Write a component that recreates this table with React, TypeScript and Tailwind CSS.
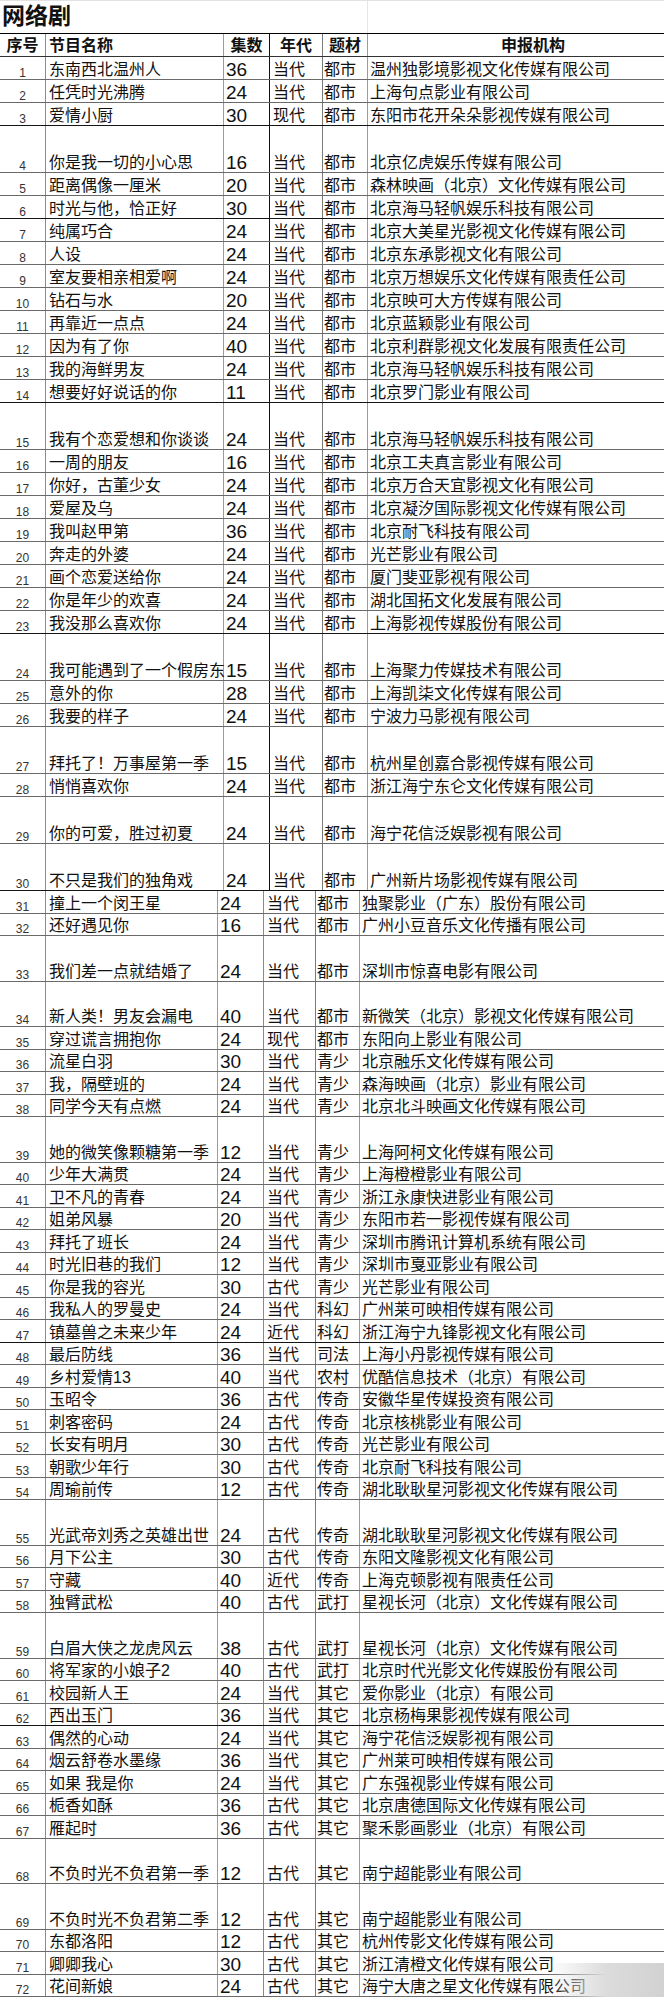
type Row = [number, string, number, string, string, string, boolean?];

const rows: Row[] = [
  [1, '东南西北温州人', 36, '当代', '都市', '温州独影境影视文化传媒有限公司'],
  [2, '任凭时光沸腾', 24, '当代', '都市', '上海句点影业有限公司'],
  [3, '爱情小厨', 30, '现代', '都市', '东阳市花开朵朵影视传媒有限公司'],
  [4, '你是我一切的小心思', 16, '当代', '都市', '北京亿虎娱乐传媒有限公司', true],
  [5, '距离偶像一厘米', 20, '当代', '都市', '森林映画（北京）文化传媒有限公司'],
  [6, '时光与他，恰正好', 30, '当代', '都市', '北京海马轻帆娱乐科技有限公司'],
  [7, '纯属巧合', 24, '当代', '都市', '北京大美星光影视文化传媒有限公司'],
  [8, '人设', 24, '当代', '都市', '北京东承影视文化有限公司'],
  [9, '室友要相亲相爱啊', 24, '当代', '都市', '北京万想娱乐文化传媒有限责任公司'],
  [10, '钻石与水', 20, '当代', '都市', '北京映可大方传媒有限公司'],
  [11, '再靠近一点点', 24, '当代', '都市', '北京蓝颖影业有限公司'],
  [12, '因为有了你', 40, '当代', '都市', '北京利群影视文化发展有限责任公司'],
  [13, '我的海鲜男友', 24, '当代', '都市', '北京海马轻帆娱乐科技有限公司'],
  [14, '想要好好说话的你', 11, '当代', '都市', '北京罗门影业有限公司'],
  [15, '我有个恋爱想和你谈谈', 24, '当代', '都市', '北京海马轻帆娱乐科技有限公司', true],
  [16, '一周的朋友', 16, '当代', '都市', '北京工夫真言影业有限公司'],
  [17, '你好，古董少女', 24, '当代', '都市', '北京万合天宜影视文化有限公司'],
  [18, '爱屋及乌', 24, '当代', '都市', '北京凝汐国际影视文化传媒有限公司'],
  [19, '我叫赵甲第', 36, '当代', '都市', '北京耐飞科技有限公司'],
  [20, '奔走的外婆', 24, '当代', '都市', '光芒影业有限公司'],
  [21, '画个恋爱送给你', 24, '当代', '都市', '厦门斐亚影视有限公司'],
  [22, '你是年少的欢喜', 24, '当代', '都市', '湖北国拓文化发展有限公司'],
  [23, '我没那么喜欢你', 24, '当代', '都市', '上海影视传媒股份有限公司'],
  [24, '我可能遇到了一个假房东', 15, '当代', '都市', '上海聚力传媒技术有限公司', true],
  [25, '意外的你', 28, '当代', '都市', '上海凯柒文化传媒有限公司'],
  [26, '我要的样子', 24, '当代', '都市', '宁波力马影视有限公司'],
  [27, '拜托了！万事屋第一季', 15, '当代', '都市', '杭州星创嘉合影视传媒有限公司', true],
  [28, '悄悄喜欢你', 24, '当代', '都市', '浙江海宁东仑文化传媒有限公司'],
  [29, '你的可爱，胜过初夏', 24, '当代', '都市', '海宁花信泛娱影视有限公司', true],
  [30, '不只是我们的独角戏', 24, '当代', '都市', '广州新片场影视传媒有限公司', true],
  [31, '撞上一个闵王星', 24, '当代', '都市', '独聚影业（广东）股份有限公司'],
  [32, '还好遇见你', 16, '当代', '都市', '广州小豆音乐文化传播有限公司'],
  [33, '我们差一点就结婚了', 24, '当代', '都市', '深圳市惊喜电影有限公司', true],
  [34, '新人类！男友会漏电', 40, '当代', '都市', '新微笑（北京）影视文化传媒有限公司', true],
  [35, '穿过谎言拥抱你', 24, '现代', '都市', '东阳向上影业有限公司'],
  [36, '流星白羽', 30, '当代', '青少', '北京融乐文化传媒有限公司'],
  [37, '我，隔壁班的', 24, '当代', '青少', '森海映画（北京）影业有限公司'],
  [38, '同学今天有点燃', 24, '当代', '青少', '北京北斗映画文化传媒有限公司'],
  [39, '她的微笑像颗糖第一季', 12, '当代', '青少', '上海阿柯文化传媒有限公司', true],
  [40, '少年大满贯', 24, '当代', '青少', '上海橙橙影业有限公司'],
  [41, '卫不凡的青春', 24, '当代', '青少', '浙江永康快进影业有限公司'],
  [42, '姐弟风暴', 20, '当代', '青少', '东阳市若一影视传媒有限公司'],
  [43, '拜托了班长', 24, '当代', '青少', '深圳市腾讯计算机系统有限公司'],
  [44, '时光旧巷的我们', 12, '当代', '青少', '深圳市戛亚影业有限公司'],
  [45, '你是我的容光', 30, '古代', '青少', '光芒影业有限公司'],
  [46, '我私人的罗曼史', 24, '当代', '科幻', '广州莱可映相传媒有限公司'],
  [47, '镇墓兽之未来少年', 24, '近代', '科幻', '浙江海宁九锋影视文化有限公司'],
  [48, '最后防线', 36, '当代', '司法', '上海小丹影视传媒有限公司'],
  [49, '乡村爱情13', 40, '当代', '农村', '优酷信息技术（北京）有限公司'],
  [50, '玉昭令', 36, '古代', '传奇', '安徽华星传媒投资有限公司'],
  [51, '刺客密码', 24, '古代', '传奇', '北京核桃影业有限公司'],
  [52, '长安有明月', 30, '古代', '传奇', '光芒影业有限公司'],
  [53, '朝歌少年行', 30, '古代', '传奇', '北京耐飞科技有限公司'],
  [54, '周瑜前传', 12, '古代', '传奇', '湖北耿耿星河影视文化传媒有限公司'],
  [55, '光武帝刘秀之英雄出世', 24, '古代', '传奇', '湖北耿耿星河影视文化传媒有限公司', true],
  [56, '月下公主', 30, '古代', '传奇', '东阳文隆影视文化有限公司'],
  [57, '守藏', 40, '近代', '传奇', '上海克顿影视有限责任公司'],
  [58, '独臂武松', 40, '古代', '武打', '星视长河（北京）文化传媒有限公司'],
  [59, '白眉大侠之龙虎风云', 38, '古代', '武打', '星视长河（北京）文化传媒有限公司', true],
  [60, '将军家的小娘子2', 40, '古代', '武打', '北京时代光影文化传媒股份有限公司'],
  [61, '校园新人王', 24, '当代', '其它', '爱你影业（北京）有限公司'],
  [62, '西出玉门', 36, '当代', '其它', '北京杨梅果影视传媒有限公司'],
  [63, '偶然的心动', 24, '当代', '其它', '海宁花信泛娱影视有限公司'],
  [64, '烟云舒卷水墨缘', 36, '当代', '其它', '广州莱可映相传媒有限公司'],
  [65, '如果 我是你', 24, '当代', '其它', '广东强视影业传媒有限公司'],
  [66, '栀香如酥', 36, '古代', '其它', '北京唐德国际文化传媒有限公司'],
  [67, '雁起时', 36, '古代', '其它', '聚禾影画影业（北京）有限公司'],
  [68, '不负时光不负君第一季', 12, '古代', '其它', '南宁超能影业有限公司', true],
  [69, '不负时光不负君第二季', 12, '古代', '其它', '南宁超能影业有限公司', true],
  [70, '东都洛阳', 12, '古代', '其它', '杭州传影文化传媒有限公司'],
  [71, '卿卿我心', 30, '古代', '其它', '浙江清橙文化传媒有限公司'],
  [72, '花间新娘', 24, '古代', '其它', '海宁大唐之星文化传媒有限公司'],
];

// rows whose bottom rule prints darker in the scan
const darkLines = new Set([3, 6, 14, 23, 30, 47, 62]);

function TableRow({ row }: { row: Row }) {
  const [no, name, eps, era, genre, org, tall] = row;
  const lower = no > 30;
  const cols = lower
    ? 'grid-cols-[46px_172px_46px_52px_44px_1fr]'
    : 'grid-cols-[46px_178px_46px_53px_45px_1fr]';
  const height = lower
    ? tall ? 'h-[45.5px]' : 'h-[22.5px]'
    : tall ? 'h-[47px]' : 'h-[23px]';
  const line = darkLines.has(no) ? 'border-[#151515]' : 'border-[#6a6a6a]';
  const epsBorder = lower ? 'border-r border-[#8a8a8a]' : 'border-r-[1.5px] border-[#111]';

  return (
    <div className={`grid ${cols} ${height} border-b ${line}`}>
      <div className="flex items-end justify-center border-r border-[#8c8c8c] text-[12px] leading-none text-[#333]">
        {no}
      </div>
      <div className="flex items-end whitespace-nowrap border-r border-[#9c9c9c] pb-[1px] pl-[3px] text-[16px] leading-none">
        {name}
      </div>
      <div className={`flex items-end pl-[2px] text-[19px] leading-none ${epsBorder}`}>{eps}</div>
      <div className="flex items-end border-r border-[#7a7a7a] pb-[1px] pl-[3px] text-[16px] leading-none">
        {era}
      </div>
      <div className="flex items-end border-r border-[#9c9c9c] pb-[1px] pl-[1px] text-[16px] leading-none">
        {genre}
      </div>
      <div className="flex items-end whitespace-nowrap pb-[1px] pl-[2px] text-[16px] leading-none">
        {org}
      </div>
    </div>
  );
}

export default function App() {
  return (
    <div className="relative w-[664px] overflow-hidden bg-white font-['Liberation_Sans','Noto_Sans_CJK_SC',sans-serif] text-[#111]">
      {/* sheet title */}
      <div className="grid h-[33px] grid-cols-[368px_1fr] border-t border-[#e2e2e2]">
        <div className="border-r border-[#e6e6e6] pl-[2px] pt-[4px] text-[23px] font-bold leading-none">网络剧</div>
        <div />
      </div>

      {/* header */}
      <div className="grid h-[24px] grid-cols-[46px_178px_46px_53px_45px_1fr] border-t-[1.5px] border-b border-t-black border-b-[#333] text-[16px] font-bold leading-none">
        <div className="flex items-end justify-center border-r border-[#8c8c8c] pb-[2px]">序号</div>
        <div className="flex items-end border-r border-[#9c9c9c] pb-[2px] pl-[3px]">节目名称</div>
        <div className="flex items-end justify-center border-r-[1.5px] border-[#111] pb-[2px]">集数</div>
        <div className="flex items-end justify-center border-r border-[#7a7a7a] pb-[2px]">年代</div>
        <div className="flex items-end justify-center border-r border-[#9c9c9c] pb-[2px]">题材</div>
        <div className="flex items-end justify-center pb-[2px] pl-[34px]">申报机构</div>
      </div>

      {rows.map((r) => (
        <TableRow key={r[0]} row={r} />
      ))}

      {/* grey smudge of the scan, bottom right */}
      <div className="absolute bottom-0 right-0 h-[34px] w-[116px] bg-gradient-to-r from-white/0 via-[#dcdcdc] to-[#d2d2d2]" />
    </div>
  );
}
